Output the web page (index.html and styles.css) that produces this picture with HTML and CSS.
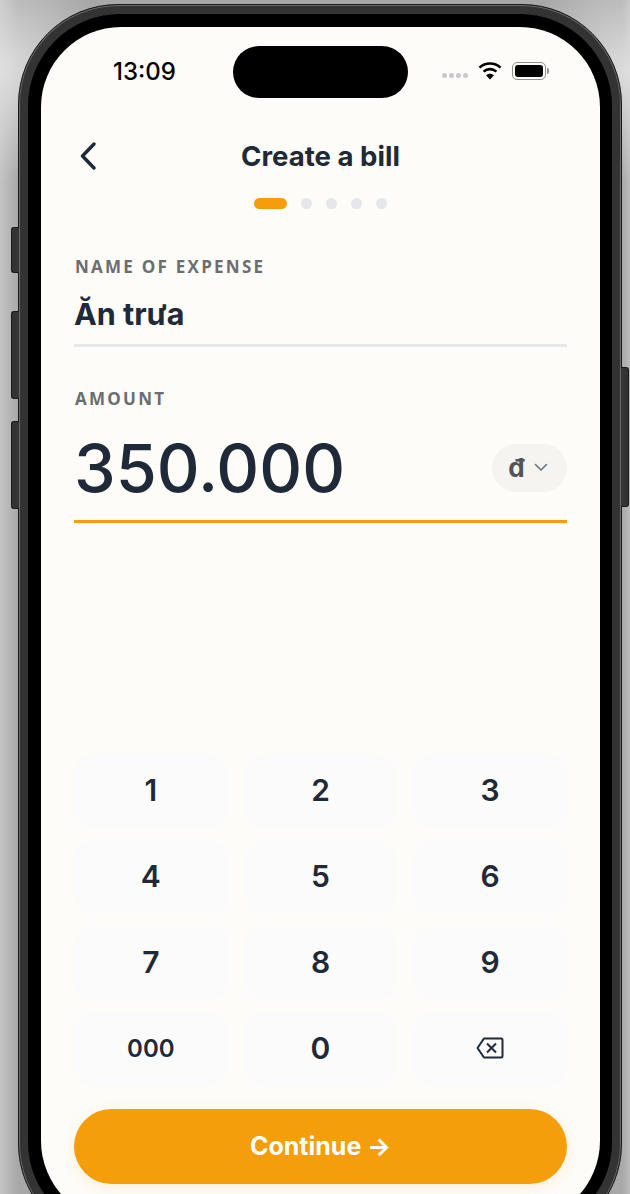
FILE: index.html
```html
<!DOCTYPE html>
<html lang="en">
<head>
    <meta charset="utf-8">
    <title>Create a bill</title>
    <meta name="viewport" content="width=device-width, initial-scale=1">
    <link rel="stylesheet" href="styles.css">
</head>
<body>
    <div class="stage">
        <div class="phone">
            <div class="side-btn side-mute"></div>
            <div class="side-btn side-up"></div>
            <div class="side-btn side-down"></div>
            <div class="side-btn side-power"></div>
            <div class="bezel">
                <div class="screen">
                    <div class="status-bar">
                        <div class="status-time">13:09</div>
                        <div class="island"></div>
                        <div class="status-icons">
                            <div class="signal"><span></span><span></span><span></span><span></span></div>
                            <svg class="wifi" width="24" height="19" viewBox="0 0 24 19">
                                <path d="M1.5 6.6C7.4 1.2 16.6 1.2 22.5 6.6" fill="none" stroke="#000" stroke-width="2.6"/>
                                <path d="M5.6 10.6C9.2 7.3 14.8 7.3 18.4 10.6" fill="none" stroke="#000" stroke-width="2.6"/>
                                <path d="M8 14.2L12 18.4L16 14.2C13.6 12.1 10.4 12.1 8 14.2Z" fill="#000"/>
                            </svg>
                            <div class="battery"><div class="battery-fill"></div></div>
                            <div class="battery-nub"></div>
                        </div>
                    </div>

                    <div class="header">
                        <svg class="back" width="18" height="28" viewBox="0 0 18 28">
                            <path d="M15 2L3.5 14L15 26" fill="none" stroke="#1f2937" stroke-width="3.4" stroke-linecap="round" stroke-linejoin="round"/>
                        </svg>
                        <div class="title">Create a bill</div>
                    </div>

                    <div class="steps">
                        <span class="step active"></span>
                        <span class="step"></span>
                        <span class="step"></span>
                        <span class="step"></span>
                        <span class="step"></span>
                    </div>

                    <div class="form">
                        <div class="label">NAME OF EXPENSE</div>
                        <div class="name-value">Ăn trưa</div>
                        <div class="label label-amount">AMOUNT</div>
                        <div class="amount-row">
                            <div class="amount-value">350.000</div>
                            <div class="currency">
                                <span>đ</span>
                                <svg width="14" height="9" viewBox="0 0 14 9">
                                    <path d="M1.5 1.5L7 7L12.5 1.5" fill="none" stroke="#6b7280" stroke-width="1.6" stroke-linecap="round" stroke-linejoin="round"/>
                                </svg>
                            </div>
                        </div>
                    </div>

                    <div class="keypad">
                        <div class="key">1</div>
                        <div class="key">2</div>
                        <div class="key">3</div>
                        <div class="key">4</div>
                        <div class="key">5</div>
                        <div class="key">6</div>
                        <div class="key">7</div>
                        <div class="key">8</div>
                        <div class="key">9</div>
                        <div class="key key-small">000</div>
                        <div class="key">0</div>
                        <div class="key">
                            <svg width="28" height="22" viewBox="0 0 28 22">
                                <path d="M8 1.5H25C26 1.5 26.5 2 26.5 3V19C26.5 20 26 20.5 25 20.5H8L1.5 11Z" fill="none" stroke="#1f2937" stroke-width="2" stroke-linejoin="round"/>
                                <path d="M11 6.5L20 15.5M20 6.5L11 15.5" fill="none" stroke="#1f2937" stroke-width="2"/>
                            </svg>
                        </div>
                    </div>

                    <div class="continue">Continue →</div>
                </div>
            </div>
        </div>
    </div>
</body>
</html>
```

FILE: styles.css
```css
* {
    box-sizing: border-box;
}

body {
    margin: 0;
    padding: 0;
    font-family: Inter, "Liberation Sans", sans-serif;
    color: #1f2937;
}

.stage {
    width: 630px;
    height: 1194px;
    overflow: hidden;
    padding: 4px 0 0 18px;
    background:
        radial-gradient(circle at 0 70px, #dedede 0, rgba(222, 222, 222, 0) 110px),
        radial-gradient(circle at 630px 70px, #dedede 0, rgba(222, 222, 222, 0) 110px),
        linear-gradient(90deg, #c4c4c4 0, #a8a8a8 18px, #a8a8a8 622px, #bcbcbc 100%);
}

/* device frame */
.phone {
    position: relative;
    width: 604px;
    height: 1240px;
    padding: 9px 9px 9px 9px;
    background: #333;
    border: 1px solid #1a1a1a;
    border-radius: 100px;
    box-shadow: inset 0 0 0 1px #6a6a6a;
}

.bezel {
    height: 100%;
    padding: 13px 12px 13px 13px;
    background: #000;
    border-radius: 92px;
}

.screen {
    display: flex;
    flex-direction: column;
    height: 100%;
    background: #fdfcf8;
    border-radius: 80px;
    overflow: hidden;
}

.side-btn {
    position: absolute;
    background: #333;
    border: 1px solid #1a1a1a;
}
.side-mute {
    left: -8px;
    top: 222px;
    width: 8px;
    height: 46px;
    border-right: 0;
    border-radius: 3px 0 0 3px;
}
.side-up {
    left: -8px;
    top: 306px;
    width: 8px;
    height: 88px;
    border-right: 0;
    border-radius: 3px 0 0 3px;
}
.side-down {
    left: -8px;
    top: 416px;
    width: 8px;
    height: 88px;
    border-right: 0;
    border-radius: 3px 0 0 3px;
}
.side-power {
    right: -8px;
    top: 362px;
    width: 8px;
    height: 140px;
    border-left: 0;
    border-radius: 0 3px 3px 0;
}

/* status bar */
.status-bar {
    display: grid;
    grid-template-columns: 192px 175px 192px;
    height: 51px;
    margin-top: 19px;
}

.status-time {
    padding: 0 0 0 72px;
    font-size: 24px;
    font-weight: 500;
    line-height: 52px;
    color: #000;
}

.island {
    background: #000;
    border-radius: 26px;
}

.status-icons {
    display: flex;
    align-items: center;
    padding: 0 0 0 34px;
    margin-top: -3px;
}

.signal {
    display: flex;
    gap: 2px;
    margin: 10px 10px 0 0;
}
.signal span {
    width: 5px;
    height: 5px;
    border-radius: 50%;
    background: #c9c9c9;
}

.wifi {
    margin-right: 10px;
}

.battery {
    width: 34px;
    height: 18px;
    padding: 2px;
    border: 1.5px solid #8f8f8f;
    border-radius: 5px;
}
.battery-fill {
    height: 100%;
    background: #000;
    border-radius: 3px;
}
.battery-nub {
    width: 2px;
    height: 6px;
    margin-left: 1px;
    background: #8f8f8f;
    border-radius: 0 2px 2px 0;
}

/* header */
.header {
    position: relative;
    height: 50px;
    margin-top: 34px;
}

.back {
    position: absolute;
    left: 38px;
    top: 11px;
}

.title {
    font-size: 27.6px;
    font-weight: 700;
    line-height: 51px;
    text-align: center;
}

.steps {
    display: flex;
    justify-content: center;
    gap: 14px;
    margin-top: 17px;
}

.step {
    width: 11px;
    height: 11px;
    background: #e5e7eb;
    border-radius: 6px;
}
.step.active {
    width: 33px;
    background: #f59e0b;
}

/* form */
.form {
    padding: 0 33px;
    margin-top: 46px;
}

.label {
    padding-left: 1px;
    font-family: "Open Sans", "Liberation Sans", sans-serif;
    font-size: 17px;
    font-weight: 700;
    letter-spacing: 2.25px;
    line-height: 24px;
    color: #6b6e70;
}

.label-amount {
    margin-top: 40px;
}

.name-value {
    box-sizing: content-box;
    height: 49px;
    padding-top: 16px;
    font-size: 30.5px;
    font-weight: 700;
    line-height: 38px;
    border-bottom: 3px solid #e7e8e9;
}

.amount-row {
    display: flex;
    align-items: center;
    justify-content: space-between;
    height: 112px;
    border-bottom: 3px solid #f59e0b;
}

.amount-value {
    padding-top: 4px;
    font-size: 66.5px;
    font-weight: 500;
    line-height: 112px;
}

.currency {
    display: flex;
    align-items: center;
    justify-content: center;
    gap: 9px;
    width: 75px;
    height: 48px;
    margin-top: 4px;
    padding-right: 3px;
    background: #f5f4f1;
    border-radius: 24px;
    font-size: 26px;
    font-weight: 700;
    color: #52555a;
}

/* keypad */
.keypad {
    display: grid;
    grid-template-columns: repeat(3, 1fr);
    grid-auto-rows: 74px;
    gap: 12px 16px;
    margin: 231px 33px 0;
}

.key {
    display: flex;
    align-items: center;
    justify-content: center;
    padding-bottom: 3px;
    background: #fbfbfb;
    border-radius: 20px;
    font-size: 30px;
    font-weight: 600;
}

.key-small {
    padding-bottom: 1px;
    font-size: 24px;
}

.continue {
    height: 75px;
    margin: 23px 33px 0;
    background: #f59e0b;
    border-radius: 38px;
    box-shadow: 0 4px 16px rgba(245, 158, 11, 0.12);
    font-size: 25px;
    font-weight: 700;
    line-height: 75px;
    text-align: center;
    color: #fff;
}
```
